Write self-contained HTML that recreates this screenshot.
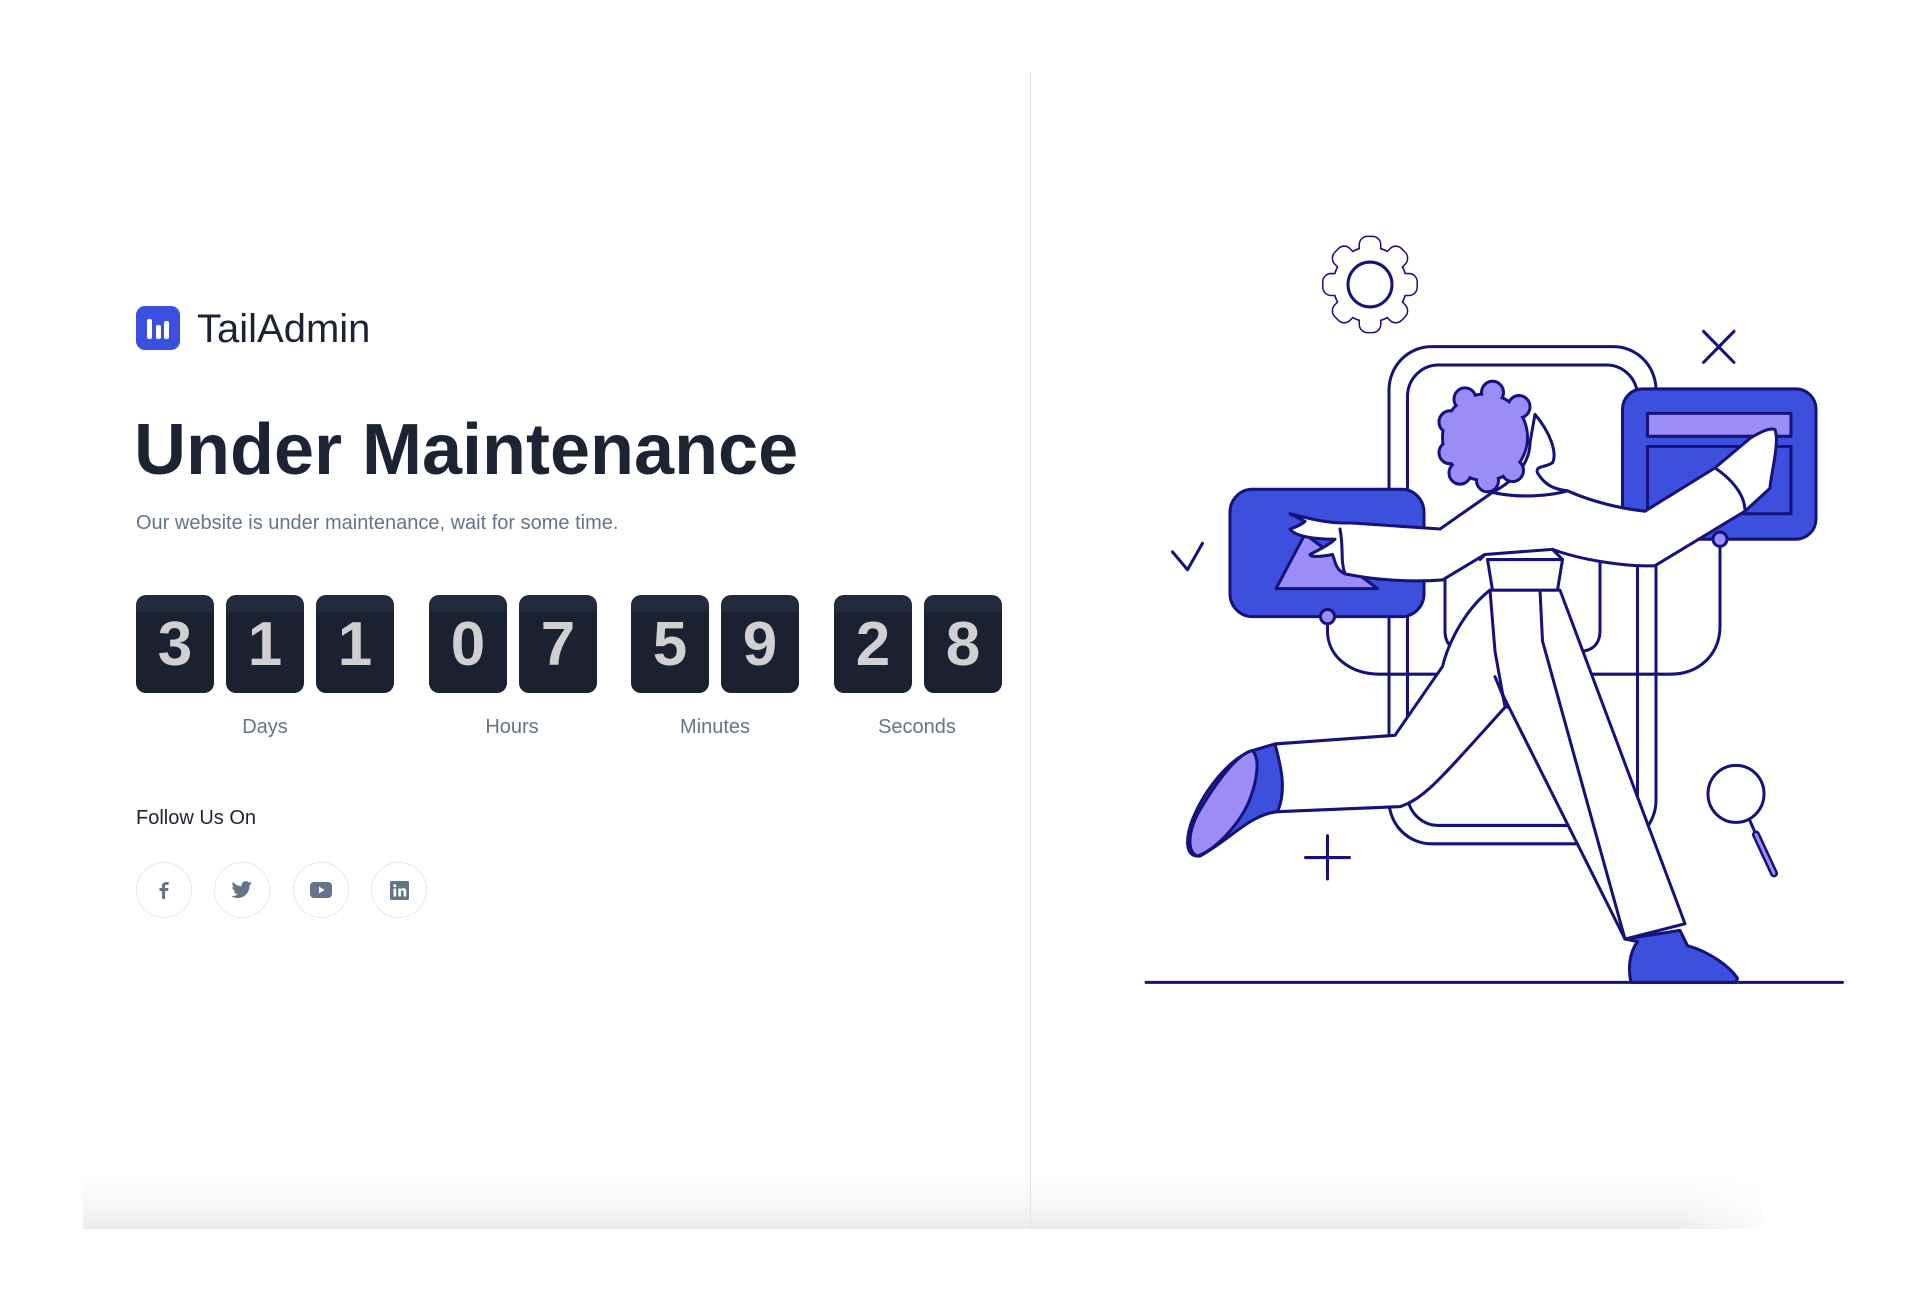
<!DOCTYPE html>
<html><head><meta charset="utf-8"><style>
*{margin:0;padding:0;box-sizing:border-box}
html,body{width:1920px;height:1301px;background:#fff;overflow:hidden;font-family:"Liberation Sans",sans-serif}
.card{position:absolute;left:83px;top:0;width:1680px;height:1229px;background:linear-gradient(to bottom,#fff 0,#fff 1175px,#f7f7f7 1205px,#ececec 1229px)}
.fade{position:absolute;left:1680px;top:1150px;width:100px;height:80px;background:linear-gradient(to right,rgba(255,255,255,0),#fff)}
.div{position:absolute;left:1030px;top:71px;width:1px;height:1158px;background:#e2e2e2}
.logo{position:absolute;left:136px;top:306px;width:44px;height:44px;border-radius:9px;background:#3c50e0}
.logo i{position:absolute;background:#fff;border-radius:2px;width:5px;bottom:11px}
.brand{position:absolute;left:197px;top:307px;font-size:40px;color:#1c2434;line-height:44px}
h1{position:absolute;left:134px;top:410px;font-size:72px;font-weight:bold;color:#1c2434;line-height:80px}
.sub{position:absolute;left:136px;top:510px;font-size:20px;color:#64748b;line-height:26px}
.box{position:absolute;top:595px;width:78px;height:98px;border-radius:10px;background:linear-gradient(#222b3b 0,#222b3b 17px,#1a2130 17px);color:#d0d0d0;font-weight:bold;font-size:62px;text-align:center;line-height:100px}
.lab{position:absolute;top:716px;font-size:20px;color:#64748b;width:160px;text-align:center}
.fol{position:absolute;left:136px;top:807px;font-size:20px;color:#1c2434}
.soc{position:absolute;top:862px;width:56px;height:56px;border:1.5px solid #e2e8f0;border-radius:50%;display:flex;align-items:center;justify-content:center}
</style></head><body>
<div class="card"></div>
<div class="fade"></div>
<div class="div"></div>
<div class="logo"><i style="left:11px;height:20px"></i><i style="left:19.5px;height:14px"></i><i style="left:28px;height:18px"></i></div>
<div class="brand">TailAdmin</div>
<h1>Under Maintenance</h1>
<div class="sub">Our website is under maintenance, wait for some time.</div>
<div class="box" style="left:136px">3</div>
<div class="box" style="left:226px">1</div>
<div class="box" style="left:316px">1</div>
<div class="box" style="left:429px">0</div>
<div class="box" style="left:519px">7</div>
<div class="box" style="left:631px">5</div>
<div class="box" style="left:721px">9</div>
<div class="box" style="left:834px">2</div>
<div class="box" style="left:924px">8</div>
<div class="lab" style="left:185px">Days</div>
<div class="lab" style="left:432px">Hours</div>
<div class="lab" style="left:635px">Minutes</div>
<div class="lab" style="left:837px">Seconds</div>
<div class="fol">Follow Us On</div>
<div class="soc" style="left:136px"><svg width="20" height="20" viewBox="0 0 20 20"><path d="M11 19V11h3l.5-3H11V6.2c0-.9.3-1.5 1.6-1.5H14.6V2.1C14.2 2 13.3 2 12.3 2 10 2 8 3.4 8 6v2H5.5v3H8v8z" fill="#64748b"/></svg></div>
<div class="soc" style="left:214px"><svg width="22" height="20" viewBox="0 0 24 20"><path d="M23 2.5c-.8.4-1.7.6-2.6.7.9-.6 1.6-1.4 2-2.5-.9.5-1.9.9-2.9 1.1C18.6.9 17.4.3 16.1.3c-2.5 0-4.6 2.1-4.6 4.6 0 .4 0 .7.1 1C7.8 5.7 4.4 3.9 2.1 1.1c-.4.7-.6 1.5-.6 2.3 0 1.6.8 3 2 3.8-.8 0-1.5-.2-2.1-.6 0 2.2 1.6 4.1 3.7 4.5-.7.2-1.4.2-2.1.1.6 1.8 2.3 3.2 4.3 3.2C5.7 16 3.4 16.8 1 16.8c-.4 0-.7 0-1-.1 2 1.3 4.5 2.1 7.1 2.1 8.5 0 13.1-7 13.1-13.1v-.6c.9-.6 1.7-1.5 2.3-2.4z" fill="#64748b"/></svg></div>
<div class="soc" style="left:293px"><svg width="22" height="16" viewBox="0 0 22 16"><rect x="0" y="0" width="22" height="16" rx="4" fill="#64748b"/><path d="M9 4.5v7l5.5-3.5z" fill="#fff"/></svg></div>
<div class="soc" style="left:371px"><svg width="19" height="19" viewBox="0 0 19 19"><rect width="19" height="19" rx="1.5" fill="#64748b"/><rect x="3.5" y="7.5" width="2.6" height="8" fill="#fff"/><circle cx="4.8" cy="4.6" r="1.5" fill="#fff"/><path d="M8.3 7.5h2.5v1.2c.5-.9 1.5-1.4 2.7-1.4 2.2 0 2.7 1.4 2.7 3.3V15.5H13.6v-4.3c0-1-.2-1.8-1.2-1.8s-1.5.7-1.5 1.8v4.3H8.3z" fill="#fff"/></svg></div>

<svg style="position:absolute;left:1100px;top:203px" width="780" height="815" viewBox="0 0 1560 1600" preserveAspectRatio="none" fill="none" stroke="#15127a" stroke-width="6" stroke-linejoin="round" stroke-linecap="round">
<defs>
<g id="gear">
<rect x="-20" y="-93" width="40" height="40" rx="15" transform="rotate(0)"/>
<rect x="-20" y="-93" width="40" height="40" rx="15" transform="rotate(45)"/>
<rect x="-20" y="-93" width="40" height="40" rx="15" transform="rotate(90)"/>
<rect x="-20" y="-93" width="40" height="40" rx="15" transform="rotate(135)"/>
<rect x="-20" y="-93" width="40" height="40" rx="15" transform="rotate(180)"/>
<rect x="-20" y="-93" width="40" height="40" rx="15" transform="rotate(225)"/>
<rect x="-20" y="-93" width="40" height="40" rx="15" transform="rotate(270)"/>
<rect x="-20" y="-93" width="40" height="40" rx="15" transform="rotate(315)"/>
<circle r="72"/>
</g>
</defs>
<g transform="translate(540 160)">
<use href="#gear" fill="#15127a" stroke="#15127a" stroke-width="6"/>
<use href="#gear" fill="#fff" stroke="none"/>
<circle r="44"/>
</g>
<path d="M1207 252L1268 313M1268 252L1207 313"/>
<path d="M145 685L175 720L205 668"/>
<path d="M455 1242V1327M411 1285H499"/>
<circle cx="1272" cy="1160" r="56"/>
<path d="M1300 1213L1312 1240" />
<path d="M1312 1240L1348 1316" stroke-width="16"/>
<path d="M1312 1240L1348 1316" stroke="#9b8cf7" stroke-width="6"/>
<path d="M92 1530H1485"/>
<rect x="578" y="282" width="534" height="976" rx="85"/>
<rect x="615" y="318" width="460" height="904" rx="62"/>
<path d="M455 812V840C455 890 500 925 560 925H1140C1200 925 1240 885 1240 830V660"/>
<path d="M690 700V840C690 870 710 880 730 880H960C985 880 1000 865 1000 840V700"/>
<rect x="260" y="562" width="388" height="250" rx="45" fill="#3d4fdd"/>
<path d="M352 757L410 650L555 757Z" fill="#9b8cf7"/>
<circle cx="455" cy="812" r="14" fill="#9b8cf7"/>
<rect x="1045" y="365" width="387" height="295" rx="40" fill="#3d4fdd"/>
<rect x="1095" y="413" width="287" height="45" fill="#9b8cf7"/>
<rect x="1095" y="478" width="287" height="132"/>
<circle cx="1240" cy="660" r="14" fill="#9b8cf7"/>
<path d="M780 760L920 760L1170 1415L1050 1445L790 935Z" fill="#fff"/>
<path d="M780 760C740 790 700 850 685 910L590 1045L350 1062L355 1195L600 1185C650 1170 690 1120 810 990L790 880Z" fill="#fff"/>
<path d="M790 930L815 990L800 950" fill="#9b8cf7"/>
<path d="M880 760L885 860L1050 1445"/>
<path d="M350 1062C360 1100 375 1150 355 1195C300 1200 260 1250 200 1282C170 1285 170 1250 185 1210C210 1150 260 1090 305 1075Z" fill="#3d4fdd"/>
<path d="M305 1075C275 1080 230 1140 195 1200C175 1240 175 1275 195 1282C230 1270 280 1220 300 1170C315 1130 320 1090 305 1075Z" fill="#9b8cf7"/>
<path d="M1050 1445L1160 1428L1175 1458C1220 1470 1260 1500 1275 1522L1272 1530H1062C1055 1500 1060 1470 1075 1450Z" fill="#3d4fdd"/>
<path d="M775 700L925 700L915 760L785 760Z" fill="#fff"/>
<path d="M380 610C420 620 460 630 500 628L680 640L785 568C840 580 900 575 935 565C980 585 1040 600 1090 605L1230 520L1300 462C1320 450 1340 440 1350 445C1360 470 1340 540 1340 560L1290 605L1110 712C1050 715 960 700 905 680L770 690L685 740C620 745 550 740 490 728C470 720 470 700 465 690C440 695 420 695 420 690C440 680 460 670 470 660C430 660 390 655 380 640C395 635 405 630 410 625Z" fill="#fff"/>
<path d="M1230 520C1260 540 1290 570 1290 605"/>
<path d="M480 640C488 680 480 700 490 728"/>
<path d="M770 690L760 700M905 680L925 700"/>
<path d="M870 415C900 450 915 490 905 510C890 520 870 515 875 530C890 555 910 562 935 565C900 575 840 580 785 568C830 545 860 510 860 470Z" fill="#fff"/>
<g fill="#9b8cf7">
<circle cx="770" cy="460" r="85"/>
<circle cx="700" cy="430" r="22"/><circle cx="700" cy="490" r="22"/><circle cx="730" cy="385" r="22"/><circle cx="785" cy="372" r="22"/>
<circle cx="838" cy="400" r="22"/><circle cx="720" cy="530" r="22"/><circle cx="775" cy="545" r="22"/><circle cx="825" cy="525" r="22"/>
</g>
<circle cx="770" cy="460" r="82" fill="#9b8cf7" stroke="none"/>
</svg>
</body></html>
